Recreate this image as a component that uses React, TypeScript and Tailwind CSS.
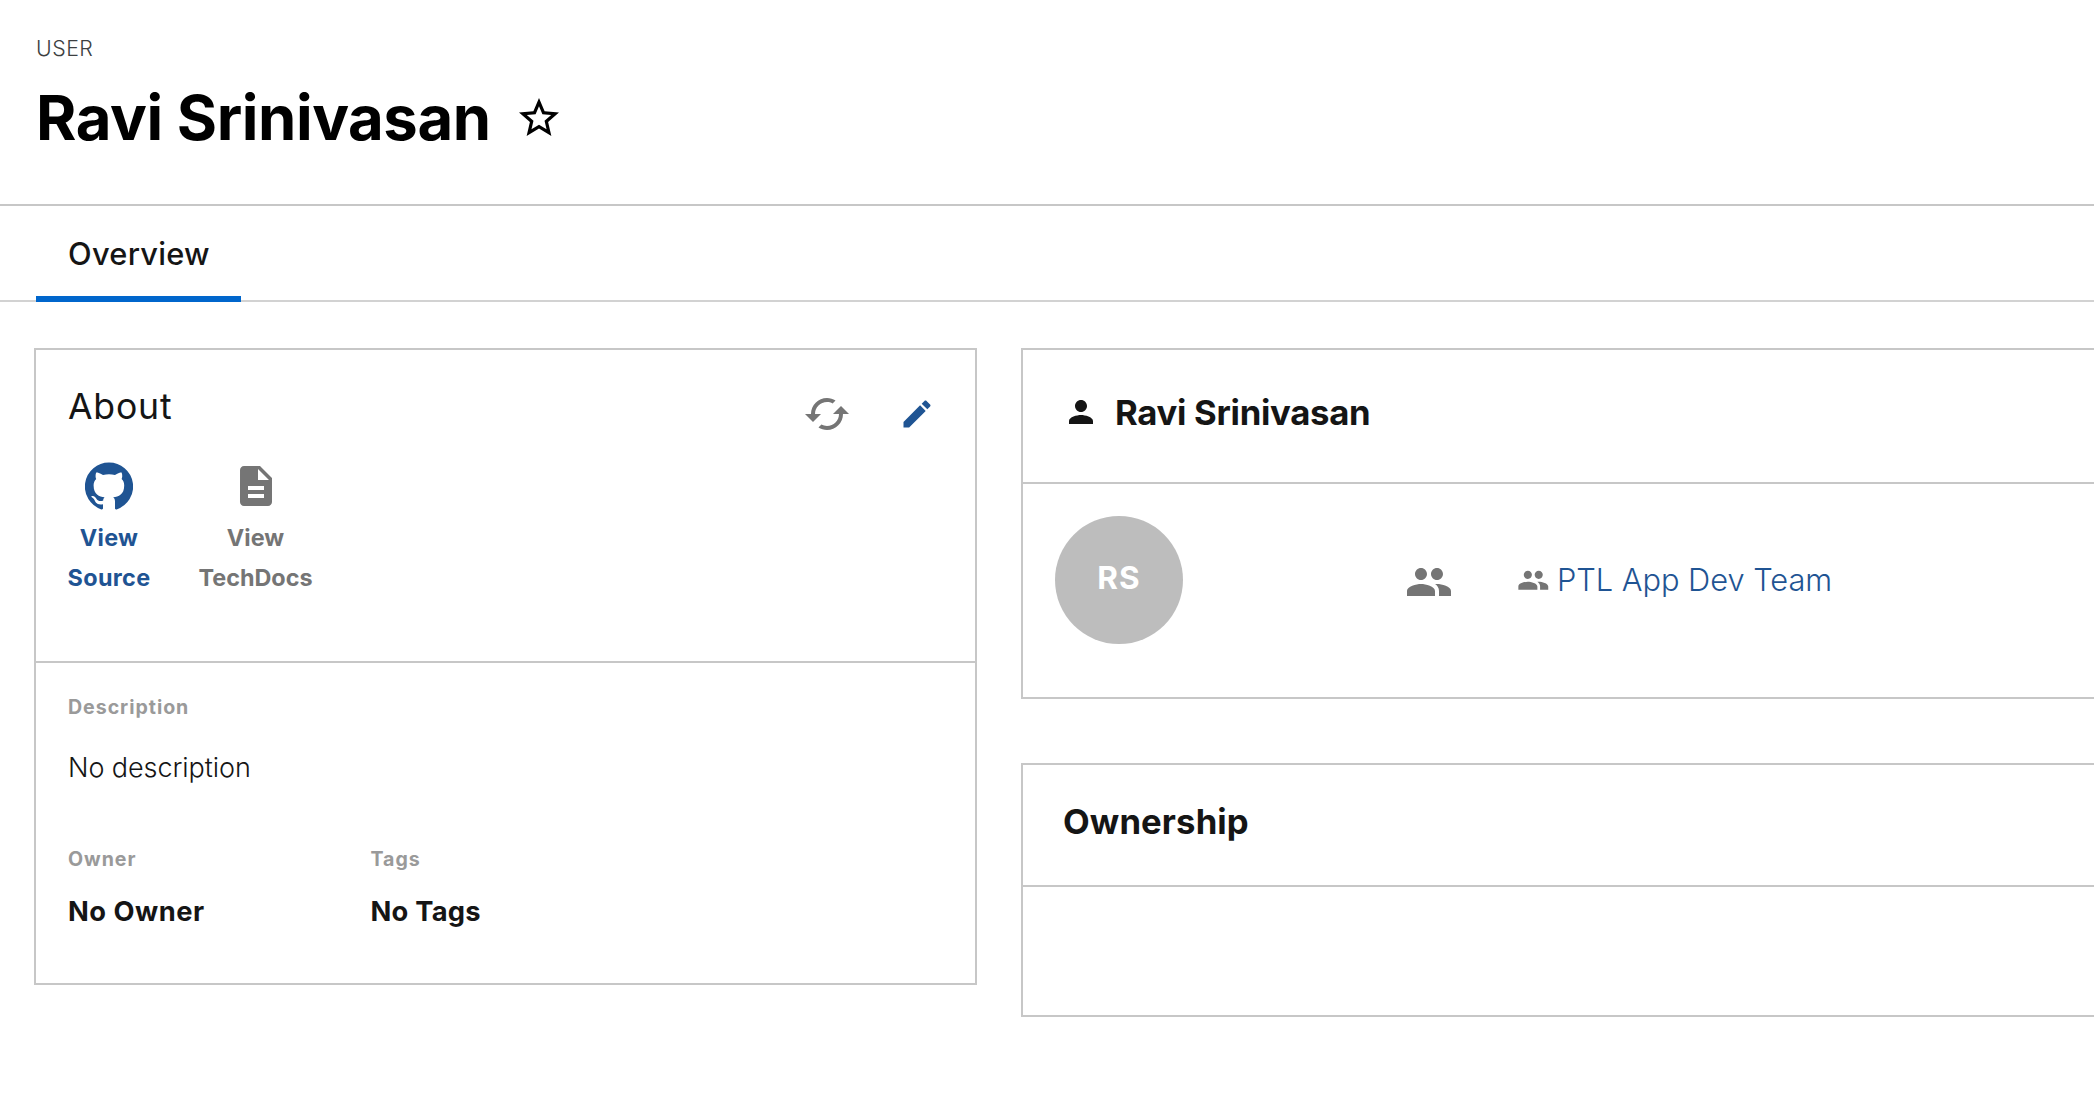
import type { ReactNode } from "react";

const paths = {
  star: "M22 9.24l-7.19-.62L12 2 9.19 8.63 2 9.24l5.46 4.73L5.82 21 12 17.27 18.18 21l-1.63-7.03L22 9.24zM12 15.4l-3.76 2.27 1-4.28-3.32-2.88 4.38-.38L12 6.1l1.71 4.04 4.38.38-3.32 2.88 1 4.28L12 15.4z",
  cached:
    "M19 8l-4 4h3c0 3.31-2.69 6-6 6-1.01 0-1.97-.25-2.8-.7l-1.46 1.46C8.97 19.54 10.43 20 12 20c4.42 0 8-3.58 8-8h3l-4-4zM6 12c0-3.31 2.69-6 6-6 1.01 0 1.97.25 2.8.7l1.46-1.46C15.03 4.46 13.57 4 12 4c-4.42 0-8 3.58-8 8H1l4 4 4-4H6z",
  edit: "M3 17.25V21h3.75L17.81 9.94l-3.75-3.75L3 17.25zM20.71 7.04c.39-.39.39-1.02 0-1.41l-2.34-2.34c-.39-.39-1.02-.39-1.41 0l-1.83 1.83 3.75 3.75 1.83-1.83z",
  github:
    "M12 .3a12 12 0 0 0-3.8 23.4c.6.1.8-.3.8-.6v-2c-3.3.7-4-1.6-4-1.6-.6-1.4-1.4-1.8-1.4-1.8-1-.7.1-.7.1-.7 1.2 0 1.9 1.2 1.9 1.2 1 1.8 2.8 1.3 3.5 1 0-.8.4-1.3.7-1.6-2.7-.3-5.5-1.3-5.5-6 0-1.2.5-2.3 1.3-3.1-.2-.4-.6-1.6 0-3.2 0 0 1-.3 3.4 1.2a11.5 11.5 0 0 1 6 0c2.3-1.5 3.3-1.2 3.3-1.2.6 1.6.2 2.8 0 3.2.9.8 1.3 1.9 1.3 3.2 0 4.6-2.8 5.6-5.5 5.9.5.4.9 1 .9 2.2v3.3c0 .3.1.7.8.6A12 12 0 0 0 12 .3",
  docs: "M14 2H6c-1.1 0-1.99.9-1.99 2L4 20c0 1.1.89 2 1.99 2H18c1.1 0 2-.9 2-2V8l-6-6zm2 16H8v-2h8v2zm0-4H8v-2h8v2zm-3-5V3.5L18.5 9H13z",
  person:
    "M12 12c2.21 0 4-1.79 4-4s-1.79-4-4-4-4 1.79-4 4 1.79 4 4 4zm0 2c-2.67 0-8 1.34-8 4v2h16v-2c0-2.66-5.33-4-8-4z",
  people:
    "M16 11c1.66 0 2.99-1.34 2.99-3S17.66 5 16 5c-1.66 0-3 1.34-3 3s1.34 3 3 3zm-8 0c1.66 0 2.99-1.34 2.99-3S9.66 5 8 5C6.34 5 5 6.34 5 8s1.34 3 3 3zm0 2c-2.33 0-7 1.17-7 3.5V19h14v-2.5c0-2.33-4.67-3.5-7-3.5zm8 0c-.29 0-.62.02-.97.05 1.16.84 1.97 1.97 1.97 3.45V19h6v-2.5c0-2.33-4.67-3.5-7-3.5z",
};

function Icon({ name, className }: { name: keyof typeof paths; className: string }) {
  return (
    <svg viewBox="0 0 24 24" fill="currentColor" className={`shrink-0 ${className}`} aria-hidden="true">
      <path d={paths[name]} />
    </svg>
  );
}

function Card({ className, children }: { className: string; children: ReactNode }) {
  return <section className={`border-2 border-[#c7c7c7] bg-white ${className}`}>{children}</section>;
}

function Label({ children }: { children: ReactNode }) {
  return <h3 className="text-[19.6px] leading-[33px] font-bold tracking-[0.95px] text-[#9a9a9a]">{children}</h3>;
}

function AboutCard() {
  return (
    <Card className="h-[637px] w-[943px]">
      <div className="h-[313px] border-b-2 border-[#c7c7c7] pt-8 pl-8">
        <div className="flex h-14 items-start justify-between pr-10">
          <h2 className="text-[35.6px] leading-[49px] tracking-[0.8px]">About</h2>
          <div className="mt-2 flex items-center gap-12">
            <Icon name="cached" className="size-12 text-[#757575]" />
            <Icon name="edit" className="size-9 text-[#1f5493]" />
          </div>
        </div>
        <nav className="mt-6 flex gap-[49px] text-center text-[23.4px] leading-10 font-bold">
          <a className="flex w-[82px] flex-col items-center gap-2 tracking-[0.35px] text-[#1f5493]">
            <Icon name="github" className="size-12" />
            <span>
              View
              <br />
              Source
            </span>
          </a>
          <a className="flex w-[113px] flex-col items-center gap-2 text-[#757575]">
            <Icon name="docs" className="size-12" />
            <span>
              View
              <br />
              TechDocs
            </span>
          </a>
        </nav>
      </div>
      <div className="pt-7 pl-8">
        <Label>Description</Label>
        <p className="mt-[23px] text-[27px] leading-[42px] font-light tracking-[-0.08px]">No description</p>
        <div className="mt-[54px] grid grid-cols-[302.5px_1fr]">
          <div>
            <Label>Owner</Label>
            <p className="mt-3.5 text-[27.3px] leading-[43px] font-bold tracking-[0.5px]">No Owner</p>
          </div>
          <div>
            <Label>Tags</Label>
            <p className="mt-3.5 text-[27.3px] leading-[43px] font-bold tracking-[0.25px]">No Tags</p>
          </div>
        </div>
      </div>
    </Card>
  );
}

function ProfileCard() {
  return (
    <Card className="h-[351px]">
      <div className="flex h-[134px] items-center border-b-2 border-[#c7c7c7] pb-2 pl-10">
        <Icon name="person" className="size-9" />
        <h2 className="ml-4 text-[34.7px] leading-[49px] font-bold tracking-[-0.3px]">Ravi Srinivasan</h2>
      </div>
      <div className="flex items-center pt-8 pl-8">
        <div className="flex size-32 items-center justify-center rounded-full bg-[#bdbdbd] pb-1 text-[31.5px] font-bold tracking-[1.2px] text-white">
          RS
        </div>
        <Icon name="people" className="mt-1 ml-[222px] size-12 text-[#757575]" />
        <Icon name="people" className="ml-[64px] size-[32.6px] text-[#757575]" />
        <a className="ml-[7.4px] text-[30.8px] leading-10 font-light text-[#1f5493] tracking-[-0.04px]">
          PTL App Dev Team
        </a>
      </div>
    </Card>
  );
}

function OwnershipCard() {
  return (
    <Card className="h-[254px]">
      <div className="h-[122px] border-b-2 border-[#c7c7c7] pt-8 pl-10">
        <h2 className="text-[34.7px] leading-[49px] font-bold tracking-[0.1px]">Ownership</h2>
      </div>
    </Card>
  );
}

export default function App() {
  return (
    <div className="h-[1104px] w-[2094px] overflow-hidden bg-white font-['Inter',sans-serif] text-[#151515]">
      <header className="h-[206px] border-b-2 border-[#c7c7c7] pt-8 pl-9">
        <p className="text-[21.3px] leading-8 font-light tracking-[0.5px] text-[#3c3f42]">USER</p>
        <div className="mt-3.5 flex items-center text-black">
          <h1 className="text-[61.6px] leading-[79px] font-bold tracking-[-0.45px]">Ravi Srinivasan</h1>
          <Icon name="star" className="ml-6 size-12" />
        </div>
      </header>
      <div className="flex h-24 border-b-2 border-[#d2d2d2] pl-9">
        <div className="-mb-0.5 flex h-24 w-[205px] justify-center border-b-6 border-[#0066cc] pt-6 pl-px">
          <span className="text-[30.8px] leading-[48px] font-medium tracking-[0.25px]">Overview</span>
        </div>
      </div>
      <main className="mt-[46px] flex items-start gap-11 pl-[34px]">
        <AboutCard />
        <div className="-mr-16 flex flex-1 flex-col gap-16">
          <ProfileCard />
          <OwnershipCard />
        </div>
      </main>
    </div>
  );
}
